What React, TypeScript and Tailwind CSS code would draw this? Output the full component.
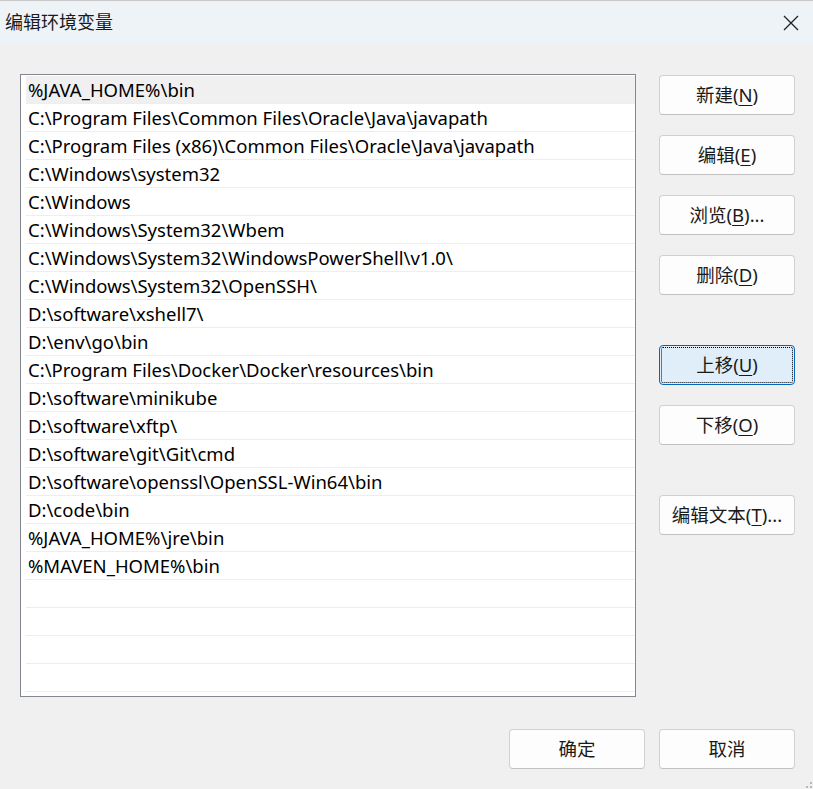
import React from "react"

const paths = [
  "%JAVA_HOME%\\bin",
  "C:\\Program Files\\Common Files\\Oracle\\Java\\javapath",
  "C:\\Program Files (x86)\\Common Files\\Oracle\\Java\\javapath",
  "C:\\Windows\\system32",
  "C:\\Windows",
  "C:\\Windows\\System32\\Wbem",
  "C:\\Windows\\System32\\WindowsPowerShell\\v1.0\\",
  "C:\\Windows\\System32\\OpenSSH\\",
  "D:\\software\\xshell7\\",
  "D:\\env\\go\\bin",
  "C:\\Program Files\\Docker\\Docker\\resources\\bin",
  "D:\\software\\minikube",
  "D:\\software\\xftp\\",
  "D:\\software\\git\\Git\\cmd",
  "D:\\software\\openssl\\OpenSSL-Win64\\bin",
  "D:\\code\\bin",
  "%JAVA_HOME%\\jre\\bin",
  "%MAVEN_HOME%\\bin",
  "",
  "",
  "",
  "",
]

function Btn({
  label,
  mn,
  suffix = "",
  focused = false,
  className = "",
}: {
  label: string
  mn?: string
  suffix?: string
  focused?: boolean
  className?: string
}) {
  return (
    <button
      className={`w-[136px] h-[40px] rounded-[4px] border flex items-center justify-center text-[18.5px] text-[#1a1a1a] ${
        focused
          ? "bg-[#e0eef9] border-[#0067c0] outline-1 outline-dotted outline-black -outline-offset-[3px]"
          : "bg-[#fdfdfd] border-[#d0d0d0] border-b-[#c0c0c0]"
      } ${className}`}
    >
      {label}
      {mn && (
        <>
          (<span className="underline underline-offset-[3px]">{mn}</span>)
        </>
      )}
      {suffix}
    </button>
  )
}

export default function App() {
  return (
    <div
      className="w-[813px] h-[789px] bg-[#f0f0f0] flex flex-col border-t border-[#c8c8c8] relative"
      style={{ fontFamily: '"Noto Sans", "Noto Sans CJK SC", sans-serif' }}
    >
      {/* title bar */}
      <div className="h-[43px] bg-[#eef3f8] flex items-center justify-between pl-[5px] pr-[10px]">
        <div className="text-[18px] text-[#1a1a1a]">编辑环境变量</div>
        <svg width="18" height="18" viewBox="0 0 18 18" className="mr-[3px]">
          <path d="M2 2 L16 16 M16 2 L2 16" stroke="#222" strokeWidth="1.3" />
        </svg>
      </div>

      <div className="flex pl-[20px] pt-[30px]">
        {/* list */}
        <div className="w-[616px] h-[623px] border border-[#828790] bg-white pl-[5px] pt-[1px] overflow-hidden">
          {paths.map((p, i) => (
            <div
              key={i}
              className={`h-[28px] flex items-center pl-[2px] text-[18.5px] text-black border-b border-[#eeeeee] whitespace-nowrap ${
                i === 0 ? "bg-[#f0f0f0]" : ""
              }`}
            >
              {p}
            </div>
          ))}
        </div>

        {/* side buttons */}
        <div className="flex flex-col ml-[23px] pt-[1px]">
          <Btn label="新建" mn="N" />
          <Btn label="编辑" mn="E" className="mt-[20px]" />
          <Btn label="浏览" mn="B" suffix="..." className="mt-[20px]" />
          <Btn label="删除" mn="D" className="mt-[20px]" />
          <Btn label="上移" mn="U" focused className="mt-[50px]" />
          <Btn label="下移" mn="O" className="mt-[20px]" />
          <Btn label="编辑文本" mn="T" suffix="..." className="mt-[50px]" />
        </div>
      </div>

      <div className="flex justify-end gap-[14px] pr-[18px] mt-[32px]">
        <Btn label="确定" />
        <Btn label="取消" />
      </div>

      {/* size grip */}
      <svg width="6" height="6" viewBox="0 0 6 6" className="absolute right-[1px] bottom-[1px]">
        <rect x="4" y="0" width="2" height="2" fill="#b8b8b8" />
        <rect x="0" y="4" width="2" height="2" fill="#b8b8b8" />
        <rect x="4" y="4" width="2" height="2" fill="#b8b8b8" />
      </svg>
    </div>
  )
}
